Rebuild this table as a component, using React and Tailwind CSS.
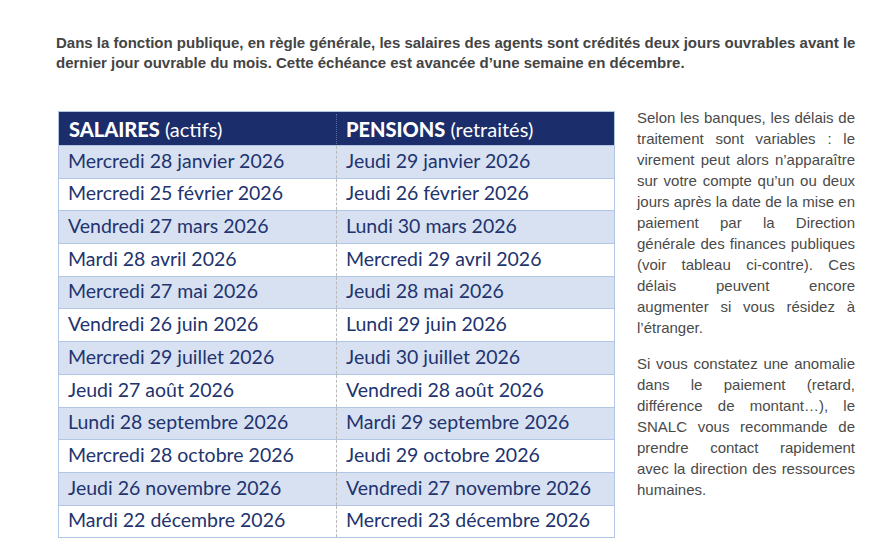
const rows = [
  ["Mercredi 28 janvier 2026", "Jeudi 29 janvier 2026"],
  ["Mercredi 25 février 2026", "Jeudi 26 février 2026"],
  ["Vendredi 27 mars 2026", "Lundi 30 mars 2026"],
  ["Mardi 28 avril 2026", "Mercredi 29 avril 2026"],
  ["Mercredi 27 mai 2026", "Jeudi 28 mai 2026"],
  ["Vendredi 26 juin 2026", "Lundi 29 juin 2026"],
  ["Mercredi 29 juillet 2026", "Jeudi 30 juillet 2026"],
  ["Jeudi 27 août 2026", "Vendredi 28 août 2026"],
  ["Lundi 28 septembre 2026", "Mardi 29 septembre 2026"],
  ["Mercredi 28 octobre 2026", "Jeudi 29 octobre 2026"],
  ["Jeudi 26 novembre 2026", "Vendredi 27 novembre 2026"],
  ["Mardi 22 décembre 2026", "Mercredi 23 décembre 2026"],
];

export default function App() {
  return (
    <div className="min-h-[552px] w-[888px] bg-white px-[56px] pt-[33px] font-['Liberation_Sans',Arial,sans-serif] text-[#444]">
      <p className="w-[805px] text-[15px] font-bold leading-[20px]">
        Dans la fonction publique, en règle générale, les salaires des agents sont crédités deux jours ouvrables avant le dernier jour ouvrable du mois. Cette échéance est avancée d’une semaine en décembre.
      </p>

      <div className="mt-[38px] flex items-start">
        <div className="ml-[2px] w-[557px] shrink-0 border border-[#b3c5e4] font-['Lato',sans-serif] text-[#22336e]">
          <div className="flex h-[33px] items-center bg-[#1b2d6b] text-white">
            <div className="w-[278px] border-r border-dotted border-[#5a6a9e] pl-[10px] text-[20px]">
              <span className="font-black">SALAIRES</span> <span className="font-normal">(actifs)</span>
            </div>
            <div className="pl-[9px] text-[20px]">
              <span className="font-black">PENSIONS</span> <span className="font-normal">(retraités)</span>
            </div>
          </div>
          {rows.map(([a, b], i) => (
            <div
              key={a}
              className={`flex h-[32.7px] items-center border-t border-[#b3c5e4] pt-[-1px] text-[19.5px] ${
                i % 2 === 0 ? "bg-[#d7e1f2]" : "bg-white"
              }`}
            >
              <div className="flex h-full w-[278px] items-center border-r border-dashed border-[#b9b9b9] pb-[3px] pl-[9px]">{a}</div>
              <div className="whitespace-nowrap pb-[3px] pl-[9px]">{b}</div>
            </div>
          ))}
        </div>

        <div className="-mt-[4px] ml-[22px] w-[218px] shrink-0 text-justify text-[15px] leading-[21px] text-[#4a4a4a]">
          <p>
            Selon les banques, les délais de traitement sont variables : le virement peut alors n’apparaître sur votre compte qu’un ou deux jours après la date de la mise en paiement par la Direction générale des finances publiques (voir tableau ci-contre). Ces délais peuvent encore augmenter si vous résidez à l’étranger.
          </p>
          <p className="mt-[15px]">
            Si vous constatez une anomalie dans le paiement (retard, différence de montant…), le SNALC vous recommande de prendre contact rapidement avec la direction des ressources humaines.
          </p>
        </div>
      </div>
    </div>
  );
}
